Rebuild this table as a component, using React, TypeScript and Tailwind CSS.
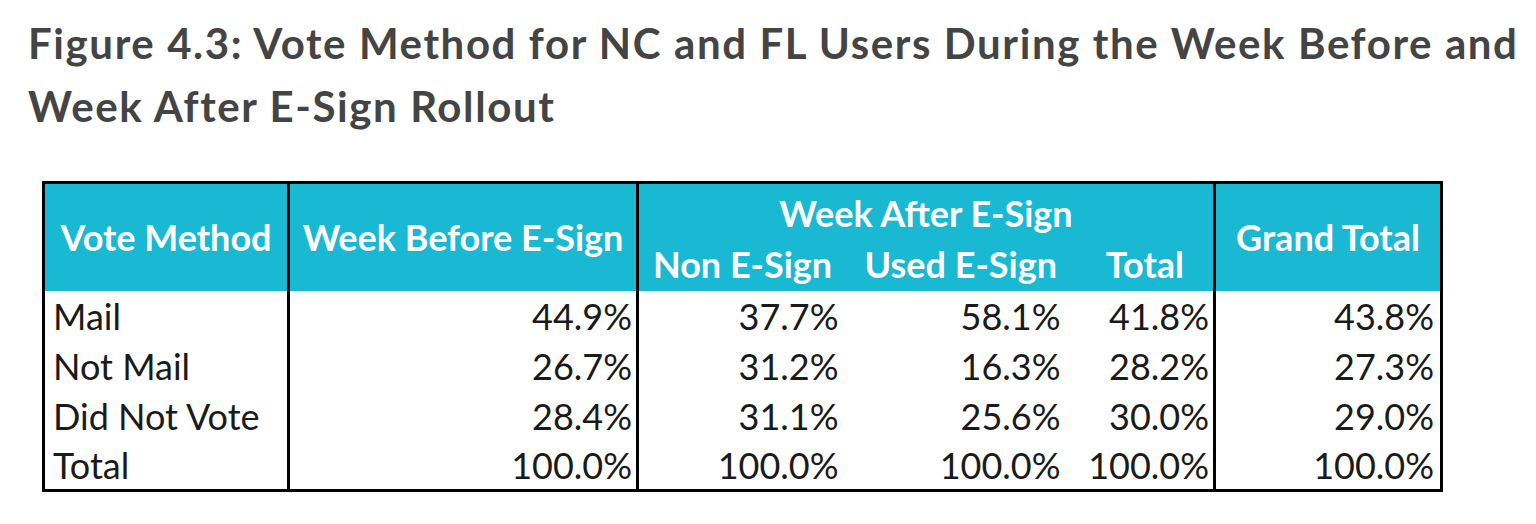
import React from "react";

type Row = {
  label: string
  before: string
  nonESign: string
  usedESign: string
  total: string
  grand: string
}

const rows: Row[] = [
  { label: "Mail", before: "44.9%", nonESign: "37.7%", usedESign: "58.1%", total: "41.8%", grand: "43.8%" },
  { label: "Not Mail", before: "26.7%", nonESign: "31.2%", usedESign: "16.3%", total: "28.2%", grand: "27.3%" },
  { label: "Did Not Vote", before: "28.4%", nonESign: "31.1%", usedESign: "25.6%", total: "30.0%", grand: "29.0%" },
  { label: "Total", before: "100.0%", nonESign: "100.0%", usedESign: "100.0%", total: "100.0%", grand: "100.0%" },
]

export default function App() {
  return (
    <div className="min-h-[524px] bg-white px-[28px] pt-[12px]">
      <h2 className="font-['Lato',sans-serif] text-[42px] font-bold leading-[63px] text-[#444444] tracking-[1.6px] whitespace-nowrap">
        Figure 4.3: Vote Method for NC and FL Users During the Week Before and
        <br />
        Week After E-Sign Rollout
      </h2>

      <table className="mt-[43px] ml-[14px] table-fixed border-collapse border-[3px] border-black font-['Lato',sans-serif] text-[36px] leading-none">
        <colgroup>
          <col className="w-[245px]" />
          <col className="w-[349px]" />
          <col className="w-[207px]" />
          <col className="w-[222px]" />
          <col className="w-[148px]" />
          <col className="w-[227px]" />
        </colgroup>
        <thead className="bg-[#19b9d3] text-white font-bold">
          <tr className="h-[54px]">
            <th rowSpan={2} className="border-r-[3px] border-black px-1 text-center font-bold whitespace-nowrap">Vote Method</th>
            <th rowSpan={2} className="border-r-[3px] border-black px-1 text-center font-bold whitespace-nowrap">Week Before E-Sign</th>
            <th colSpan={3} className="border-r-[3px] border-black pt-[6px] text-center font-bold whitespace-nowrap">Week After E-Sign</th>
            <th rowSpan={2} className="px-1 text-center font-bold whitespace-nowrap">Grand Total</th>
          </tr>
          <tr className="h-[54px]">
            <th className="pl-[14px] text-left font-bold whitespace-nowrap">Non E-Sign</th>
            <th className="pl-[20px] text-left font-bold whitespace-nowrap">Used E-Sign</th>
            <th className="border-r-[3px] border-black pr-[29px] text-right font-bold whitespace-nowrap">Total</th>
          </tr>
        </thead>
        <tbody className="text-[#1a1a1a] font-normal">
          {rows.map((r) => (
            <tr key={r.label} className="h-[50px]">
              <td className="border-r-[3px] border-black pl-[8px] text-left whitespace-nowrap">{r.label}</td>
              <td className="border-r-[3px] border-black pr-[4px] text-right">{r.before}</td>
              <td className="pr-[6px] text-right">{r.nonESign}</td>
              <td className="pr-[6px] text-right">{r.usedESign}</td>
              <td className="border-r-[3px] border-black pr-[4px] text-right">{r.total}</td>
              <td className="pr-[6px] text-right">{r.grand}</td>
            </tr>
          ))}
        </tbody>
      </table>
    </div>
  );
}
